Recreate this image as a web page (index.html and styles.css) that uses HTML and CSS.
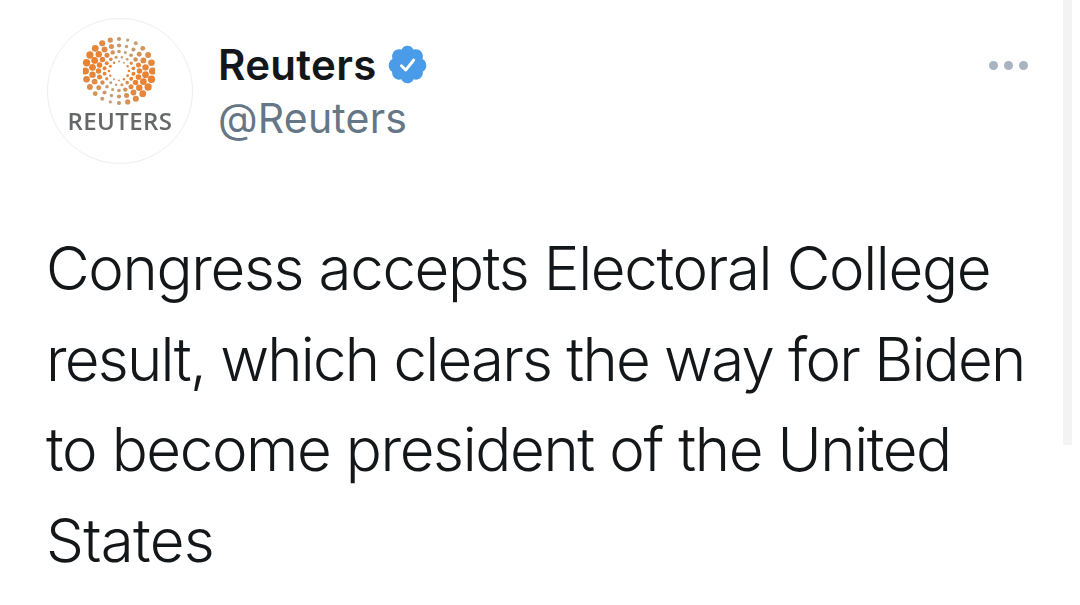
FILE: index.html
```html
<!DOCTYPE html>
<html lang="en">
<head>
<meta charset="utf-8">
<title>Reuters tweet</title>
<link rel="stylesheet" href="styles.css">
</head>
<body>
<main class="tweet">
  <header class="head">
    <div class="avatar">
      <svg class="globe" id="globe" viewBox="-36 -36 72 72" aria-hidden="true"></svg>
      <span class="brand">REUTERS</span>
    </div>
    <div class="names">
      <div class="name-row">
        <span class="name">Reuters</span>
        <svg class="badge" viewBox="0 0 24 24" aria-hidden="true">
          <path fill="#4a9ce8" d="M22.5 12.5c0-1.58-.875-2.95-2.148-3.6.154-.435.238-.905.238-1.4 0-2.21-1.71-3.998-3.818-3.998-.47 0-.92.084-1.336.25C14.818 2.415 13.51 1.5 12 1.5s-2.816.917-3.437 2.25c-.415-.165-.866-.25-1.336-.25-2.11 0-3.818 1.79-3.818 4 0 .494.083.964.237 1.4-1.272.65-2.147 2.018-2.147 3.6 0 1.495.782 2.798 1.942 3.486-.02.17-.032.34-.032.514 0 2.21 1.708 4 3.818 4 .47 0 .92-.086 1.335-.25.62 1.334 1.926 2.25 3.437 2.25 1.512 0 2.818-.916 3.437-2.25.415.163.865.248 1.336.248 2.11 0 3.818-1.79 3.818-4 0-.174-.012-.344-.033-.513 1.158-.687 1.943-1.99 1.943-3.484z"/>
          <path fill="none" stroke="#fff" stroke-width="1.6" stroke-linecap="round" stroke-linejoin="round" d="M8.6 12.7l2.4 2.4 4.5-5.6"/>
        </svg>
      </div>
      <div class="handle">@Reuters</div>
    </div>
    <div class="more" aria-hidden="true"><i></i><i></i><i></i></div>
  </header>
  <p class="text"><span class="line l1">Congress accepts Electoral College</span><span class="line l2">result, which clears the way for Biden</span><span class="line l3">to become president of the United</span><span class="line l4">States</span></p>
</main>
<div class="scroll-track" aria-hidden="true"></div>
<script src="logo.js"></script>
</body>
</html>
```

FILE: styles.css
```css
html, body {
  margin: 0;
  height: 100%;
  background: #fff;
  overflow: hidden;
}
body {
  font-family: Inter, "Liberation Sans", sans-serif;
  color: #14171a;
}
.tweet {
  padding: 18px 52px 0 47px;
}
.head {
  display: flex;
  align-items: flex-start;
}
.avatar {
  width: 146px;
  height: 146px;
  box-sizing: border-box;
  border: 1px solid #eeeeee;
  border-radius: 50%;
  display: flex;
  flex-direction: column;
  align-items: center;
  padding-top: 16px;
}
.globe {
  width: 72px;
  height: 72px;
  margin-right: 2px;
  filter: blur(0.6px);
}
.brand {
  font-family: "Open Sans", sans-serif;
  font-weight: 600;
  font-size: 24px;
  line-height: 28px;
  letter-spacing: 0.4px;
  white-space: nowrap;
  color: #666769;
  filter: blur(0.4px);
}
.names {
  margin-left: 25px;
  padding-top: 20px;
}
.name-row {
  display: flex;
  align-items: center;
  gap: 9px;
  height: 53px;
}
.name {
  font-size: 42px;
  font-weight: 600;
  letter-spacing: 0.3px;
  line-height: 53px;
}
.badge {
  width: 43px;
  height: 43px;
}
.handle {
  font-size: 41px;
  font-weight: 400;
  letter-spacing: 0.2px;
  line-height: 51px;
  margin-top: 2px;
  color: #657786;
}
.more {
  margin-left: auto;
  margin-top: 43px;
  display: flex;
  gap: 6px;
}
.more i {
  width: 9px;
  height: 9px;
  border-radius: 50%;
  background: #a9b4c1;
}
.text {
  margin: 59px 0 0 -1px;
  font-size: 60px;
  line-height: 90.5px;
  font-weight: 300;
  white-space: nowrap;
}
.line {
  display: block;
}
.l1 { letter-spacing: -1.36px; }
.l2 { letter-spacing: -1.78px; }
.l3 { letter-spacing: -1.4px; }
.l4 { letter-spacing: -0.7px; }
.scroll-track {
  position: absolute;
  left: 1063px;
  top: 0;
  width: 9px;
  height: 445px;
  background: #f3f3f3;
}
```

FILE: logo.js
```js
// Concentric rings of dots: larger and more orange toward the left/right sides,
// small and grey-brown at the top and bottom.
const NS = "http://www.w3.org/2000/svg";
const globe = document.getElementById("globe");
const rings = [
  [32, 24, 3.7, 1.6],
  [25.5, 22, 3.4, 1.7],
  [19.5, 20, 2.8, 1.5],
  [14, 16, 2.0, 1.2],
  [9.5, 12, 1.4, 0.9]
];
const mix = (a, b, t) => Math.round(a + (b - a) * t);
rings.forEach(([r, n, big, small], ri) => {
  for (let k = 0; k < n; k++) {
    const a = (k + ri * 0.5) / n * Math.PI * 2;
    const t = Math.abs(Math.cos(a - 0.3)) ** 1.2;
    const dot = document.createElementNS(NS, "circle");
    dot.setAttribute("cx", (r * 1.05 * Math.cos(a)).toFixed(2));
    dot.setAttribute("cy", (r * Math.sin(a)).toFixed(2));
    dot.setAttribute("r", (small + (big - small) * t).toFixed(2));
    dot.setAttribute("fill", `rgb(${mix(195, 234, t)},${mix(160, 130, t)},${mix(120, 50, t)})`);
    globe.appendChild(dot);
  }
});
```
